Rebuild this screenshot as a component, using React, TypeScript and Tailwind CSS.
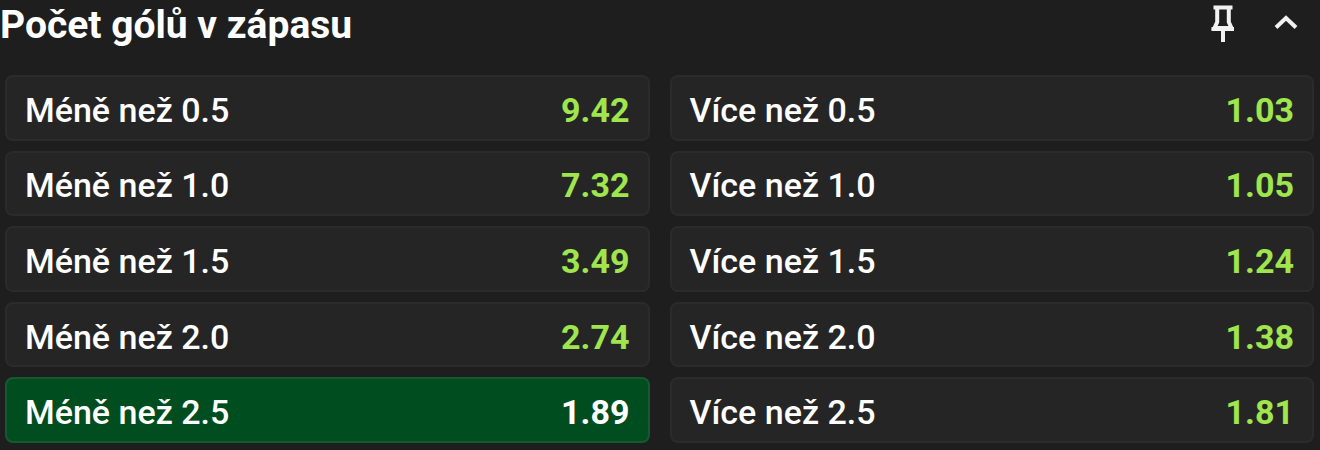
import { useState } from 'react'
import clsx from 'clsx'

const outcomes = [
  { label: 'Méně než 0.5', odds: '9.42' },
  { label: 'Více než 0.5', odds: '1.03' },
  { label: 'Méně než 1.0', odds: '7.32' },
  { label: 'Více než 1.0', odds: '1.05' },
  { label: 'Méně než 1.5', odds: '3.49' },
  { label: 'Více než 1.5', odds: '1.24' },
  { label: 'Méně než 2.0', odds: '2.74' },
  { label: 'Více než 2.0', odds: '1.38' },
  { label: 'Méně než 2.5', odds: '1.89' },
  { label: 'Více než 2.5', odds: '1.81' },
]

function PinIcon() {
  return (
    <svg className="w-6 h-10" viewBox="0 0 24 40" fill="none" stroke="currentColor" strokeWidth="4">
      <path d="M3.5 4.5H22.5" />
      <path d="M7.2 4V19L4.5 25H21.5L18.8 19V4" />
      <path d="M1.5 26H24M13 26V39" />
    </svg>
  )
}

function ChevronIcon() {
  return (
    <svg className="w-6 h-4" viewBox="0 0 24 16" fill="none" stroke="currentColor" strokeWidth="4">
      <path d="M2 12.5L12 3L22 12.5" />
    </svg>
  )
}

export default function App() {
  const [selected, setSelected] = useState('Méně než 2.5')
  const [open, setOpen] = useState(true)

  return (
    <section className="min-h-screen bg-[#1e1e1e] font-['Roboto',sans-serif] text-white">
      {/* Market header */}
      <header className="flex items-start justify-between pr-[22px] pb-[25px]">
        <h2 className="text-[39px] leading-[50px] font-bold">Počet gólů v zápasu</h2>
        <div className="flex h-[46px] items-center gap-10 text-[#f2f2f2]">
          <button type="button" aria-label="Připnout">
            <PinIcon />
          </button>
          <button
            type="button"
            aria-label="Sbalit"
            aria-expanded={open}
            onClick={() => setOpen(!open)}
          >
            <ChevronIcon />
          </button>
        </div>
      </header>

      {/* Odds */}
      {open && (
        <div className="grid h-[368px] grid-cols-2 auto-rows-fr gap-x-5 gap-y-2.5 pl-[5px] pr-1.5">
          {outcomes.map(({ label, odds }) => {
            const active = label === selected
            return (
              <button
                key={label}
                type="button"
                aria-pressed={active}
                onClick={() => setSelected(active ? '' : label)}
                className={clsx(
                  'flex items-center justify-between rounded-lg border-2 px-[18px] pt-1 text-[34px] leading-[40px]',
                  active ? 'border-[#17592f] bg-[#004d20]' : 'border-[#2b2b2b] bg-[#252525]',
                )}
              >
                <span className="font-medium">{label}</span>
                <span className={clsx('font-bold', active ? 'text-white' : 'text-[#9fe64e]')}>{odds}</span>
              </button>
            )
          })}
        </div>
      )}
    </section>
  )
}
